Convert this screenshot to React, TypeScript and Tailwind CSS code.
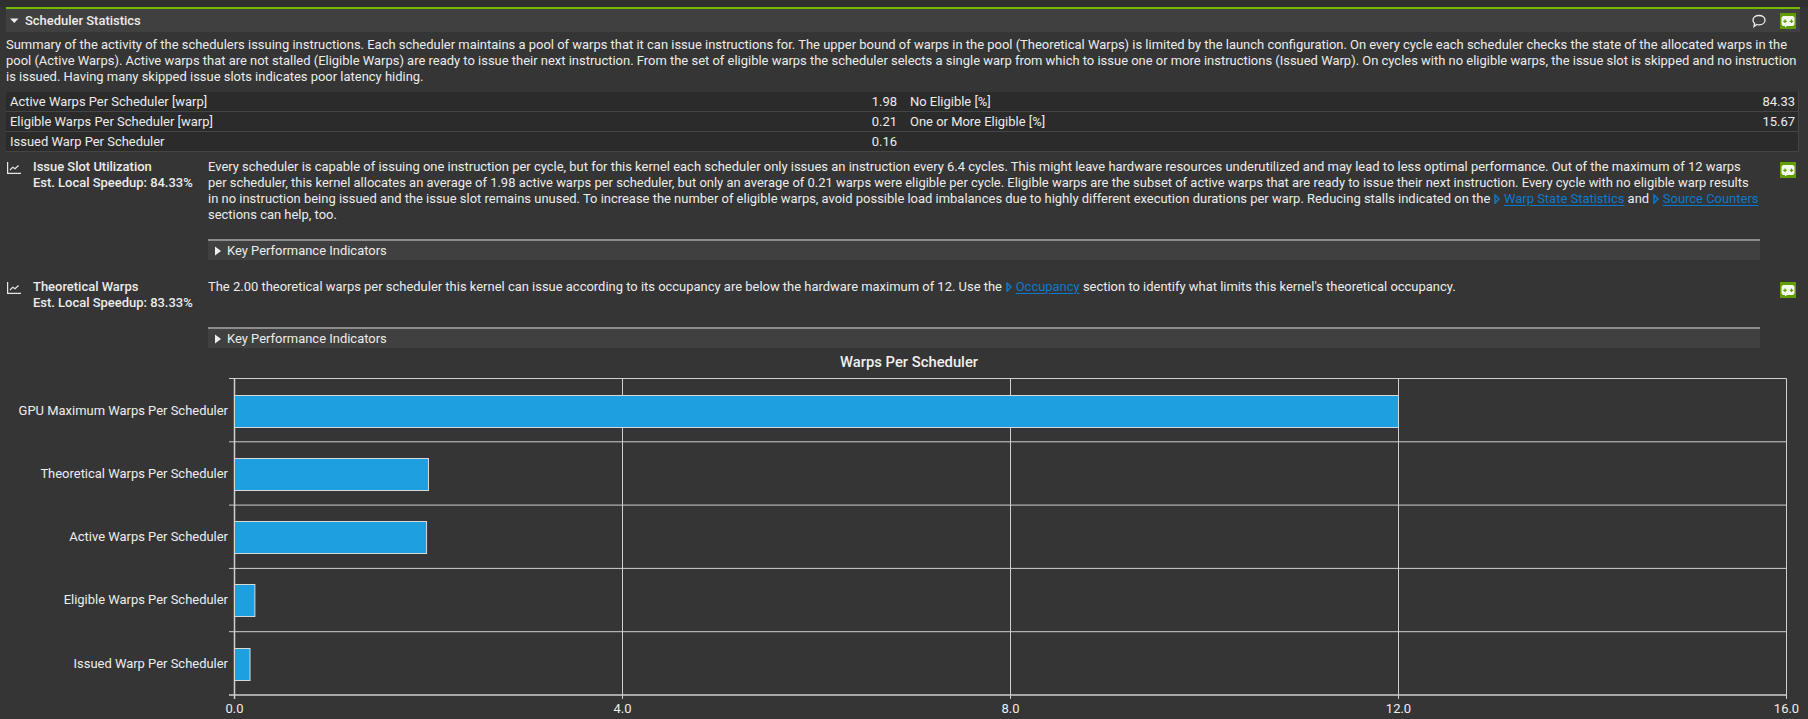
import React from "react";

const ROWS: [string, string, string, string][] = [
  ["Active Warps Per Scheduler [warp]", "1.98", "No Eligible [%]", "84.33"],
  ["Eligible Warps Per Scheduler [warp]", "0.21", "One or More Eligible [%]", "15.67"],
  ["Issued Warp Per Scheduler", "0.16", "", ""],
];

const BARS = [
  { label: "GPU Maximum Warps Per Scheduler", value: 12 },
  { label: "Theoretical Warps Per Scheduler", value: 2 },
  { label: "Active Warps Per Scheduler", value: 1.98 },
  { label: "Eligible Warps Per Scheduler", value: 0.21 },
  { label: "Issued Warp Per Scheduler", value: 0.16 },
];

function NvBadge() {
  return (
    <svg width="16" height="16" viewBox="0 0 16 16" className="shrink-0">
      <rect width="16" height="16" fill="#619c00" />
      <path d="M3 3h10l1.5 1.5v7L13 13H7l-2 1.5V13H3l-1.5-1.5v-7z" fill="#f4f8ec" />
      <path d="M3.3 8.3h3.4M5 6.6v3.4M9.8 8.3h3.4M11.5 6.6v3.4" stroke="#619c00" strokeWidth="1.2" fill="none" />
    </svg>
  );
}

function ChartIcon() {
  return (
    <svg width="14" height="12" viewBox="0 0 14 12" fill="none" stroke="#e8e8e8" strokeWidth="1.2" className="shrink-0">
      <path d="M.6 0v11.4H14" />
      <path d="M3 8l2.8-2.8 2.2 1.6 3.5-3.3" />
    </svg>
  );
}

function Arrow({ down }: { down?: boolean }) {
  return (
    <svg width="9" height="10" viewBox="0 0 9 10" className="shrink-0" fill="#eeeeee">
      {down ? <path d="M0 2.5h8.5L4.25 7z" /> : <path d="M2 .5l6 4.5-6 4.5z" />}
    </svg>
  );
}

function Jump({ children }: { children: string }) {
  return (
    <a className="text-[#0a7acc] underline underline-offset-2">
      <svg width="6" height="10" viewBox="0 0 6 10" className="inline-block ml-[1px] mr-[3.5px] mb-[1px]" fill="none" stroke="#0a7acc" strokeWidth="1.5">
        <path d="M1 1l4 4-4 4z" />
      </svg>
      {children}
    </a>
  );
}

function Recommendation({
  title,
  speedup,
  height,
  children,
}: {
  title: string;
  speedup: string;
  height: string;
  children: React.ReactNode;
}) {
  return (
    <div className="flex">
      <div className="w-[33px] pl-[7px] pt-[3px] shrink-0">
        <ChartIcon />
      </div>
      <div className="w-[175px] shrink-0 font-medium">
        {title}
        <br />
        {speedup}
      </div>
      <div className="w-[1552px] shrink-0">
        <div className={height}>{children}</div>
        <div className="h-[21px] bg-[#404040] border-t-2 border-[#8c8c8c] flex items-center gap-[5px] pl-[5px]">
          <Arrow />
          <span>Key Performance Indicators</span>
        </div>
      </div>
      <div className="pl-[20px] pt-[3px]">
        <NvBadge />
      </div>
    </div>
  );
}

function Chart() {
  const x0 = 234.5;
  const unit = (1786.5 - 234.5) / 16;
  const top = 30.5;
  const bandH = 63.3;
  const grid = "#cfcfcf";
  return (
    <svg width="1808" height="371" className="block" style={{ fontFamily: "Roboto, sans-serif" }}>
      <text x="909" y="19" textAnchor="middle" fill="#f0f0f0" fontSize="14.8" fontWeight="500">
        Warps Per Scheduler
      </text>
      {[0, 1, 2, 3, 4, 5].map((i) => (
        <line key={i} x1={229} x2={1786.5} y1={top + i * bandH} y2={top + i * bandH} stroke={grid} strokeWidth={i === 5 ? 1.5 : 1} />
      ))}
      {[0, 4, 8, 12, 16].map((v) => (
        <g key={v}>
          <line x1={x0 + v * unit} x2={x0 + v * unit} y1={top} y2={top + 5 * bandH + 4} stroke={grid} strokeWidth={v === 0 ? 1.5 : 1} />
          <text x={x0 + v * unit} y={top + 5 * bandH + 18} textAnchor="middle" fill="#eeeeee" fontSize="12.96">
            {v.toFixed(1)}
          </text>
        </g>
      ))}
      {BARS.map((b, i) => (
        <g key={b.label}>
          <rect x={x0} y={Math.round(top + i * bandH + 16) + 0.5} width={b.value * unit} height={32} fill="#1e9fe0" stroke="#d8d8d8" strokeWidth="1" />
          <text x={228} y={top + i * bandH + 36} textAnchor="end" fill="#eeeeee" fontSize="12.96">
            {b.label}
          </text>
        </g>
      ))}
    </svg>
  );
}

export default function App() {
  return (
    <div className="w-[1808px] h-[719px] overflow-hidden bg-[#353535] text-[#ececec] text-[12.96px] leading-[16px] font-['Roboto',sans-serif]">
      <div className="h-[7px] bg-[#2f2f2f]" />
      <div className="ml-[6px] w-[1794px]">
        <div className="h-[2px] bg-[#76b900]" />
        <div className="h-[23px] bg-[#404040] flex items-center pl-[4px] pr-[4px]">
          <Arrow down />
          <span className="ml-[6px] font-medium">Scheduler Statistics</span>
          <svg width="16" height="16" viewBox="0 0 16 16" fill="none" stroke="#eeeeee" strokeWidth="1.3" className="ml-auto mr-[13px]">
            <path d="M8 2.5c3.4 0 6 2 6 4.7s-2.6 4.6-6 4.6c-.8 0-1.5-.1-2.2-.3L3 13.5l.6-3C2.6 9.6 2 8.5 2 7.2c0-2.7 2.6-4.7 6-4.7z" />
          </svg>
          <NvBadge />
        </div>
        <p className="mt-[5px] text-[#ececec]">
          Summary of the activity of the schedulers issuing instructions. Each scheduler maintains a pool of warps that it can issue instructions for. The upper bound of warps in the pool (Theoretical Warps) is limited by the launch configuration. On every cycle each scheduler checks the state of the allocated warps in the pool (Active Warps). Active warps that are not stalled (Eligible Warps) are ready to issue their next instruction. From the set of eligible warps the scheduler selects a single warp from which to issue one or more instructions (Issued Warp). On cycles with no eligible warps, the issue slot is skipped and no instruction is issued. Having many skipped issue slots indicates poor latency hiding.
        </p>
        <div className="mt-[7px] w-[1793px] bg-[#2b2b2b] border-r border-[#444444]">
          {ROWS.map((r) => (
            <div key={r[0]} className="flex h-[20px] border-b border-[#454545] leading-[19px]">
              <div className="w-[896px] flex justify-between pl-[4px] pr-[5px]">
                <span>{r[0]}</span>
                <span>{r[1]}</span>
              </div>
              <div className="flex-1 flex justify-between pl-[8px] pr-[3px]">
                <span>{r[2]}</span>
                <span>{r[3]}</span>
              </div>
            </div>
          ))}
        </div>
      </div>
      <div className="mt-[7px]">
        <Recommendation title="Issue Slot Utilization" speedup="Est. Local Speedup: 84.33%" height="h-[80px]">
          Every scheduler is capable of issuing one instruction per cycle, but for this kernel each scheduler only issues an instruction every 6.4 cycles. This might leave hardware resources underutilized and may lead to less optimal performance. Out of the maximum of 12 warps per scheduler, this kernel allocates an average of 1.98 active warps per scheduler, but only an average of 0.21 warps were eligible per cycle. Eligible warps are the subset of active warps that are ready to issue their next instruction. Every cycle with no eligible warp results in no instruction being issued and the issue slot remains unused. To increase the number of eligible warps, avoid possible load imbalances due to highly different execution durations per warp. Reducing stalls indicated on the <Jump>Warp State Statistics</Jump> and <Jump>Source Counters</Jump> sections can help, too.
        </Recommendation>
      </div>
      <div className="mt-[19px]">
        <Recommendation title="Theoretical Warps" speedup="Est. Local Speedup: 83.33%" height="h-[48px]">
          The 2.00 theoretical warps per scheduler this kernel can issue according to its occupancy are below the hardware maximum of 12. Use the <Jump>Occupancy</Jump> section to identify what limits this kernel's theoretical occupancy.
        </Recommendation>
      </div>
      <Chart />
    </div>
  );
}
